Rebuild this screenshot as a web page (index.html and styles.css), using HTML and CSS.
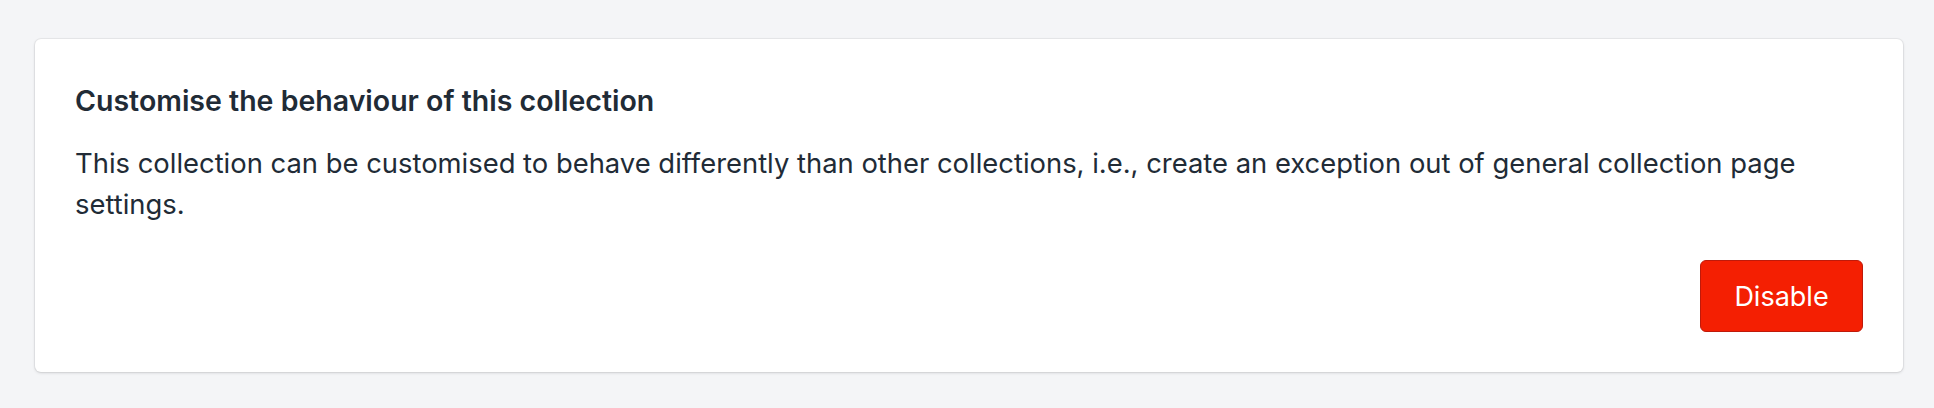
FILE: index.html
```html
<!DOCTYPE html>
<html lang="en">
<head>
<meta charset="utf-8">
<title>Collection settings</title>
<link rel="stylesheet" href="styles.css">
</head>
<body>
<main class="page">
  <section class="card">
    <h2 class="card-title">Customise the behaviour of this collection</h2>
    <p class="card-text">This collection can be customised to behave differently than other collections, i.e., create an exception out of general collection page settings.</p>
    <div class="card-actions">
      <button class="btn-destructive" type="button">Disable</button>
    </div>
  </section>
</main>
</body>
</html>
```

FILE: styles.css
```css
html, body {
  margin: 0;
  padding: 0;
  background: #f4f5f7;
}

body {
  font-family: Inter, "Noto Sans", "Liberation Sans", sans-serif;
  color: #212b36;
}

.page {
  padding: 39px 31px 36px 35px;
}

.card {
  background: #ffffff;
  border-radius: 6px;
  box-shadow: 0 0 0 1px rgba(63, 63, 68, 0.06), 0 1px 3px 0 rgba(63, 63, 68, 0.18);
  padding: 42px 40px 40px 40px;
}

.card-title {
  margin: 0;
  font-size: 28.5px;
  font-weight: 600;
  line-height: 40px;
}

.card-text {
  margin: 22px 0 0 0;
  font-size: 27.4px;
  font-weight: 400;
  line-height: 40.5px;
}

.card-actions {
  display: flex;
  justify-content: flex-end;
  margin-top: 36px;
}

.btn-destructive {
  width: 163px;
  height: 72px;
  border: 1.5px solid #bf1a0a;
  border-radius: 6px;
  background: #f41f02;
  color: #ffffff;
  font-family: Inter, "Noto Sans", "Liberation Sans", sans-serif;
  font-size: 27px;
  font-weight: 400;
  cursor: pointer;
}
```
